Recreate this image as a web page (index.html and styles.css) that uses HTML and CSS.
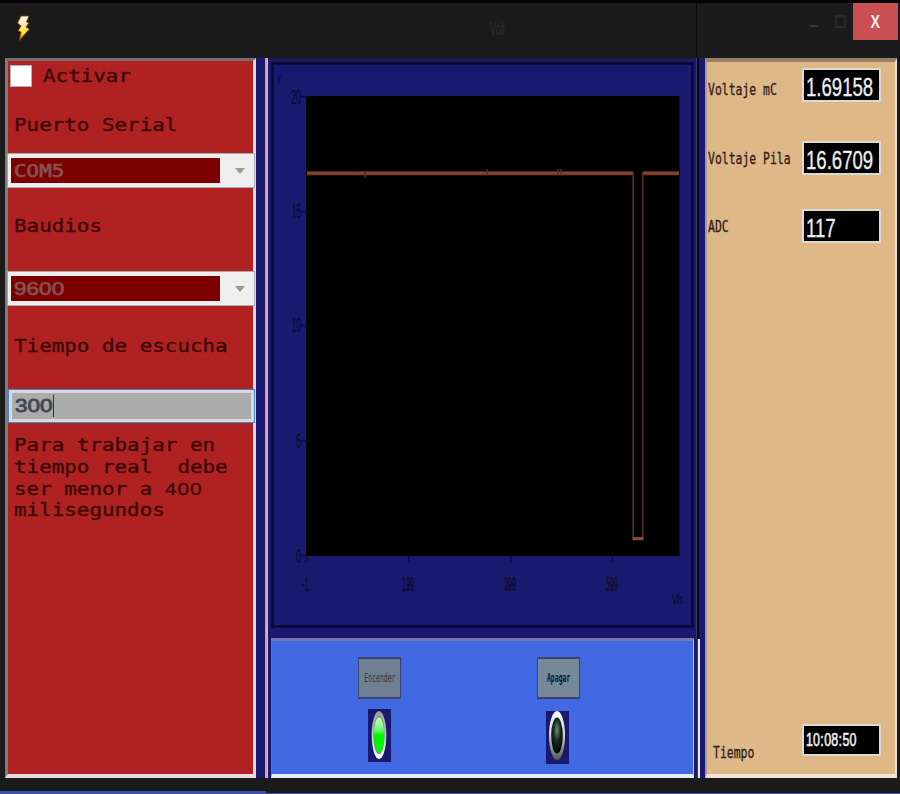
FILE: index.html
```html
<!DOCTYPE html>
<html lang="es">
<head>
<meta charset="utf-8">
<title>Volt</title>
<link rel="stylesheet" href="styles.css">
</head>
<body>
<div class="window">
  <header class="titlebar">
    <svg class="bolt" width="16" height="28" viewBox="0 0 16 28">
      <defs><linearGradient id="bolt" x1="0" y1="0" x2="0" y2="1"><stop offset="0" stop-color="#fffdf0"/><stop offset=".4" stop-color="#ffe6a0"/><stop offset=".7" stop-color="#ffe500"/><stop offset="1" stop-color="#e04000"/></linearGradient></defs>
      <path d="M5 1H13L10.500 7L13 8L10 12L13.500 14L3 26L5 17L2 16L5 11L1.500 8Z" fill="url(#bolt)" stroke="#7c2808" stroke-width=".8"/>
    </svg>
    <span class="title"><span>Volt</span></span>
    <i class="seam"></i>
    <div class="controls">
      <svg width="42" height="30" viewBox="0 0 42 30"><path d="M6 23H14" stroke="#343434" stroke-width="2"/><rect x="32" y="13" width="9" height="11" fill="none" stroke="#2c2c2c" stroke-width="1.6"/></svg>
      <div class="close"><span>X</span></div>
    </div>
  </header>
  <main class="body">
    <section class="serial">
      <label class="check"><i></i><span class="wide">Activar</span></label>
      <div class="caption c1"><span class="wide">Puerto Serial</span></div>
      <div class="combo"><div class="value"><span class="wide">COM5</span></div><b></b></div>
      <div class="caption c2"><span class="wide">Baudios</span></div>
      <div class="combo"><div class="value"><span class="wide digits">9600</span></div><b></b></div>
      <div class="caption c3"><span class="wide">Tiempo de escucha</span></div>
      <div class="entry"><span class="wide digits">300</span><em></em></div>
      <div class="note"><span class="wide">Para trabajar en
tiempo real  debe
ser menor a <span class="num">400</span>
milisegundos</span></div>
    </section>
    <div class="split-left"></div>
    <section class="center">
      <div class="chart">
        <svg width="423" height="570" viewBox="271 59 423 570">
          <rect x="271" y="59" width="423" height="570" fill="#191970"/>
          <rect x="271" y="59" width="423" height="3" fill="#211c50"/>
          <path d="M272.500 629V63.500H692.500V626.500H271" fill="none" stroke="#080739" stroke-width="2.400"/>
          <rect x="306" y="96" width="373.500" height="460" fill="#000"/>
          <path d="M301 96.500H307M301 211.500H307M301 325.500H307M301 440.500H307M301 555.500H307M306.500 555V562M408.500 555V562M511 555V562M612.500 555V562" stroke="#0d0d3c" stroke-width="1.300"/>
          <path d="M307 173.200H633M643 173.200H679" stroke="#3d180b" stroke-width="5"/>
          <path d="M307 173.200H633M643 173.200H679" stroke="#7c4830" stroke-width="3"/>
          <path d="M633.200 172V539M642.800 172V539" fill="none" stroke="#5d2d16" stroke-width="1.600"/>
          <path d="M632.500 538.700H643.500" stroke="#8a4a30" stroke-width="3.200"/>
          <path d="M365.300 172V178M487 169V175M558 169V175M561 169V175" stroke="#5f301c" stroke-width="1.400"/>
          <g class="ticks">
            <text class="unit" x="277" y="85" textLength="4" lengthAdjust="spacingAndGlyphs">Y</text>
            <text x="291" y="104" textLength="10" lengthAdjust="spacingAndGlyphs">20</text>
            <text x="292" y="218" textLength="9" lengthAdjust="spacingAndGlyphs">15</text>
            <text x="292" y="332" textLength="9" lengthAdjust="spacingAndGlyphs">10</text>
            <text x="296" y="448" textLength="5" lengthAdjust="spacingAndGlyphs">5</text>
            <text x="296" y="563" textLength="5" lengthAdjust="spacingAndGlyphs">0</text>
            <text x="302" y="591" textLength="7" lengthAdjust="spacingAndGlyphs">-1</text>
            <text x="402" y="591" textLength="12" lengthAdjust="spacingAndGlyphs">199</text>
            <text x="504" y="591" textLength="12" lengthAdjust="spacingAndGlyphs">399</text>
            <text x="606" y="591" textLength="12" lengthAdjust="spacingAndGlyphs">599</text>
            <text class="unit" x="672" y="604" textLength="11" lengthAdjust="spacingAndGlyphs">V/s</text>
          </g>
        </svg>
      </div>
      <div class="switches">
        <div class="switch">
          <div class="button off"><span>Encender</span></div>
          <svg width="23" height="53" viewBox="0 0 23 53">
            <defs><linearGradient id="on" x1="0" y1="0" x2="0" y2="1"><stop offset="0" stop-color="#c6ffc6"/><stop offset=".35" stop-color="#70f770"/><stop offset=".5" stop-color="#00f500"/><stop offset="1" stop-color="#00fb00"/></linearGradient>
            <linearGradient id="ring" x1="0" y1="0" x2="0" y2="1"><stop offset="0" stop-color="#9b9b9b"/><stop offset="1" stop-color="#fff"/></linearGradient></defs>
            <rect width="23" height="53" fill="#191970"/><ellipse cx="11" cy="26" rx="7.300" ry="24" fill="url(#ring)"/><ellipse cx="11" cy="26" rx="5.800" ry="19" fill="#669a66"/><ellipse cx="11" cy="26" rx="5.200" ry="17.500" fill="url(#on)"/>
          </svg>
        </div>
        <div class="switch">
          <div class="button"><span>Apagar</span></div>
          <svg class="low" width="23" height="53" viewBox="0 0 23 53">
            <defs><radialGradient id="dark" cx=".5" cy=".35" r=".6"><stop offset="0" stop-color="#6e8a6e"/><stop offset=".5" stop-color="#182c1c"/><stop offset="1" stop-color="#020b04"/></radialGradient>
            <linearGradient id="rim" x1="0" y1="0" x2="0" y2="1"><stop offset="0" stop-color="#fff"/><stop offset=".5" stop-color="#d0d0d0"/><stop offset="1" stop-color="#555"/></linearGradient></defs>
            <rect width="23" height="53" fill="#191970"/><ellipse cx="11" cy="24.500" rx="8" ry="24.500" fill="url(#rim)"/><ellipse cx="11" cy="24.500" rx="5.800" ry="18" fill="url(#dark)"/>
          </svg>
        </div>
      </div>
    </section>
    <div class="split-right"><i></i><b></b></div>
    <section class="readings">
      <div class="row r1"><span class="name">Voltaje mC</span><div class="lcd"><span>1.69158</span></div></div>
      <div class="row r2"><span class="name">Voltaje Pila</span><div class="lcd"><span>16.6709</span></div></div>
      <div class="row r3"><span class="name">ADC</span><div class="lcd"><span>117</span></div></div>
      <div class="row r4"><span class="name">Tiempo</span><div class="lcd clock"><span><u>10</u><u>:</u><u>08</u><u>:</u><u>50</u></span></div></div>
    </section>
  </main>
  <footer class="foot"><i></i><b></b></footer>
</div>
</body>
</html>
```
FILE: styles.css
```css
* { box-sizing: border-box; }
body { margin: 0; background: #1b1b1b; font-family: "DejaVu Sans Mono", monospace; }
.window { width: 900px; height: 794px; display: flex; flex-direction: column; overflow: hidden; }
span { display: inline-block; white-space: pre; transform-origin: 0 50%; }

.titlebar { height: 58px; flex: none; border-top: 3px solid #060408; display: flex; background: #1b1b1b; }
.bolt { margin: 12px 0 0 16px; }
.title { margin: 15px 0 0 458px; width: 16px; font: 19px/22px "Liberation Sans", sans-serif; color: #2d2d2d; }
.title span { transform: scaleX(.47); }
.seam { width: 1px; margin-left: 190px; background: #0c0c0c; }
.controls { display: flex; margin-left: auto; }
.controls > svg { margin-right: 7px; }
.close { width: 45px; height: 37px; margin-right: 2px; background: #c94f53; color: #eee; text-align: center; font: bold 19px/38px "Liberation Sans", sans-serif; }
.close span { transform: scaleX(.75); transform-origin: 50% 50%; }

.body { height: 720px; flex: none; display: flex; padding-left: 5px; }
.serial { width: 251px; background: #b02222; border: solid; border-width: 3px 3px 4px 3px; border-color: #77706e #ded8e0 #e8e0e0 #817b78; display: flex; flex-direction: column; }
.wide { font-size: 17px; line-height: 22px; color: #3c0808; -webkit-text-stroke: .35px #3c0808; transform: scaleX(1.228); }
.check { height: 33px; display: flex; padding: 4px 0 0 2px; }
.check i { width: 22px; height: 22px; background: #fff; border: 1px solid #bfb0b0; }
.check .wide { margin-left: 11px; line-height: 23px; }
.caption { padding-left: 6px; flex: none; }
.c1 { height: 59px; padding-top: 20px; }
.c2 { height: 83px; padding-top: 27px; }
.c3 { height: 83px; padding-top: 29px; }
.combo { width: 248px; height: 35px; margin-left: -1px; flex: none; display: flex; background: #eee; border: 1px solid #aaa; padding: 4px 0 4px 3px; }
.combo .value { width: 209px; background: #7d0000; padding-left: 3px; }
.combo b { width: 0; height: 0; border: 5px solid transparent; border-top: 6px solid #999; border-bottom: 0; margin: 10px 0 0 15px; }
.combo .wide { color: #865050; -webkit-text-stroke: .7px #865050; line-height: 26px; }
.wide.digits { font-family: "Liberation Sans", sans-serif; font-size: 17.5px; transform: scaleX(1.29); }
.entry { width: 247px; height: 34px; flex: none; display: flex; background: #ababab; border: 1px solid #3f88d8; box-shadow: inset 0 0 0 3px #d6d9de; padding: 4px 0 0 6px; }
.entry .wide { color: #404850; -webkit-text-stroke: .8px #404850; line-height: 24px; }
.entry em { width: 1px; height: 22px; background: #333; margin: 1px 0 0 9px; }
.note { padding: 12px 0 0 6px; }
.note .wide { line-height: 21.8px; }
.num { font-family: "Liberation Sans", sans-serif; letter-spacing: .8px; }

.split-left { width: 15px; background: linear-gradient(90deg, #191970 0 9px, #e09ba0 9px 11px, #c0c0dc 11px 12px, #191970 12px 15px); }
.center { width: 423px; display: flex; flex-direction: column; background: #191970; }
.chart { height: 571px; padding-top: 1px; }
.chart svg { display: block; }
.ticks text { font: 20px "Liberation Sans", sans-serif; fill: #0b0b35; stroke: #0b0b35; stroke-width: .5px; }
.ticks .unit { font-size: 14px; }
.switches { margin-top: 9px; height: 140px; display: flex; background: #4169e1; border: solid; border-width: 3px 1px 4px 1px; border-color: #7878ae #b8c4ed #e8edff #6670b0; padding: 16px 0 0 86px; gap: 137px; }
.switch { width: 43px; display: flex; flex-direction: column; align-items: flex-start; }
.button { width: 43px; height: 42px; flex: none; background: #778899; border: 1px solid #344572; border-width: 2px 1px; color: #10151c; display: flex; justify-content: center; line-height: 38px; font-size: 12px; }
.button span { transform: scaleX(.54); transform-origin: 50% 50%; font-weight: bold; }
.button.off { background: #6f7f91; color: #323b48; }
.button.off span { font-weight: normal; }
.switch svg { margin: 10px 0 0 10px; }
.switch .low { margin: 12px 0 0 9px; }
.switch + .switch { margin-left: -1px; }

.split-right { width: 11px; display: flex; flex-direction: column; }
.split-right i { height: 581px; background: linear-gradient(90deg, #191970 0 2px, #3a3a68 2px 3px, #05051c 3px 5px, #191970 5px 11px); }
.split-right b { height: 139px; background: linear-gradient(90deg, #191970 0 3px, #3a3a80 3px 4px, #e8e8f8 4px 6px, #191970 6px 11px); }

.readings { width: 192px; background: #deb887; border: solid; border-width: 4px 2px 4px 2px; border-color: #988068 #eee0d4 #f2e2d3 #a89a94; display: flex; flex-direction: column; }
.row { display: flex; height: 34px; }
.name { width: 94px; flex: none; margin-left: 1px; font-size: 15px; line-height: 20px; color: #30201a; -webkit-text-stroke: .3px #30201a; transform: scaleX(.762); }
.lcd { width: 79px; height: 34px; flex: none; background: #000; border: 2px solid #ded9d5; overflow: hidden; padding: 5px 0 0 2px; }
.lcd span { display: block; font: 26px/25px "Liberation Sans", sans-serif; color: #eee; -webkit-text-stroke: .3px #eee; transform: scaleX(.715); }
.r1 { margin-top: 6px; }
.r2 { margin-top: 39px; }
.r3 { margin-top: 34px; }
.r1 .name { margin-top: 12px; }
.r2 .name { margin-top: 8px; }
.r3 .name { margin-top: 8px; }
.r4 { margin-top: auto; margin-bottom: 18px; height: 32px; }
.r4 .name { margin: 19px -5px 0 6px; }
.lcd.clock { height: 32px; padding-top: 0; }
.lcd.clock span { display: flex; font: 18px/28px "Liberation Sans", sans-serif; -webkit-text-stroke: .6px #eee; transform: scaleX(.69); }
.clock u { text-decoration: none; }
.clock u:nth-child(even) { width: 11px; text-align: center; }

.foot { flex: 1; display: flex; align-items: flex-end; }
.foot i { width: 266px; height: 3px; background: #4050a8; }
.foot b { flex: 1; height: 1px; background: #4050a8; }
```
